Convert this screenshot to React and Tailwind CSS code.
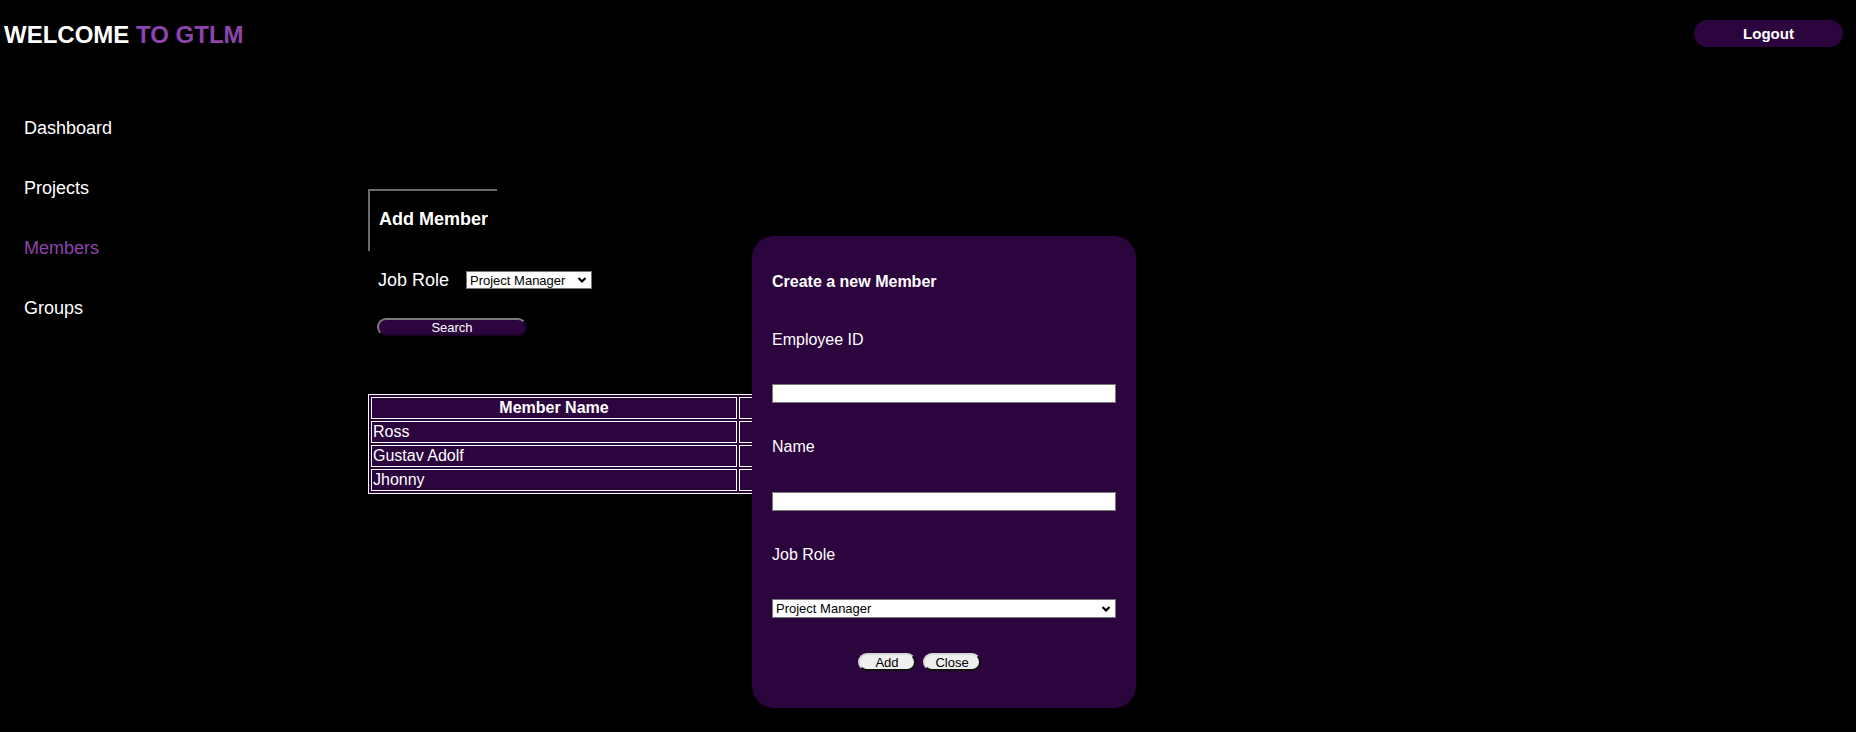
import React, { useState } from 'react';

const roles = ['Project Manager', 'Developer', 'Tester', 'Designer'];

const members = [
  { name: 'Ross', role: 'Project Manager' },
  { name: 'Gustav Adolf', role: 'Project Manager' },
  { name: 'Jhonny', role: 'Project Manager' },
];

const Chevron = () => (
  <svg width="10" height="8" viewBox="0 0 10 8" className="pointer-events-none absolute right-[5px] top-1/2 -translate-y-1/2">
    <path d="M1.5 2 L5 5.5 L8.5 2" fill="none" stroke="#000" strokeWidth="2.2" />
  </svg>
);

const RoleSelect = ({ value, onChange, className }) => (
  <div className={'relative ' + className}>
    <select
      value={value}
      onChange={(e) => onChange(e.target.value)}
      className="block h-full w-full appearance-none rounded-none border border-[#767676] bg-white py-0 pl-[3px] pr-[16px] text-[13px] leading-[15px] text-black outline-none"
    >
      {roles.map((r) => (
        <option key={r} value={r}>{r}</option>
      ))}
    </select>
    <Chevron />
  </div>
);

const App = () => {
  const [searchRole, setSearchRole] = useState('Project Manager');
  const [newRole, setNewRole] = useState('Project Manager');
  const [empId, setEmpId] = useState('');
  const [name, setName] = useState('');

  return (
    <div className="relative h-[732px] w-full overflow-hidden bg-black text-white" style={{ fontFamily: '"Liberation Sans", Arial, sans-serif' }}>
      {/* header */}
      <div className="flex items-start justify-between pt-[20px] pr-[13px]">
        <h1 className="mt-[1px] pl-[4px] text-[24px] font-bold leading-[28px]">
          WELCOME <span className="text-[#8e44ad]">TO GTLM</span>
        </h1>
        <button className="h-[27px] w-[149px] rounded-full bg-[#2c043e] pt-[1px] text-[15px] font-bold text-white">
          Logout
        </button>
      </div>

      <div className="flex">
        {/* sidebar */}
        <nav className="mt-[69px] flex w-[368px] shrink-0 flex-col gap-[40px] pl-[24px] text-[18px] leading-[20px]">
          <a className="text-white">Dashboard</a>
          <a className="text-white">Projects</a>
          <a className="text-[#8e44ad]">Members</a>
          <a className="text-white">Groups</a>
        </nav>

        {/* main */}
        <div className="mt-[140px] flex flex-col">
          <div className="h-[62px] w-[129px] border-l-2 border-t-2 border-[#6b6b6b] pl-[9px] pt-[18px]">
            <h2 className="whitespace-nowrap text-[18px] font-bold leading-[20px]">Add Member</h2>
          </div>

          <div className="mt-[19px] flex items-center pl-[10px]">
            <label className="w-[88px] text-[18px] leading-[20px]">Job Role</label>
            <RoleSelect value={searchRole} onChange={setSearchRole} className="h-[18px] w-[126px]" />
          </div>

          <button className="ml-[9px] mt-[28px] h-[18px] w-[150px] rounded-full border-2 border-b-[#1a0026] border-l-[#7a7a7a] border-r-[#1a0026] border-t-[#7a7a7a] bg-[#2c043e] text-[13px] leading-none text-white">
            Search
          </button>

          <table className="mt-[58px] w-[700px] border-separate border-spacing-[2px] border border-white bg-[#2c043e] text-[16px] leading-[18px]">
            <thead>
              <tr>
                <th className="w-[366px] border border-white px-[1px] py-[1px] font-bold">Member Name</th>
                <th className="border border-white px-[1px] py-[1px] font-bold">Job Role</th>
              </tr>
            </thead>
            <tbody>
              {members.map((m) => (
                <tr key={m.name}>
                  <td className="border border-white px-[1px] py-[1px]">{m.name}</td>
                  <td className="border border-white px-[1px] py-[1px] text-center">{m.role}</td>
                </tr>
              ))}
            </tbody>
          </table>
        </div>
      </div>

      {/* create member modal */}
      <div className="absolute left-[752px] top-[236px] z-10 h-[472px] w-[384px] rounded-[22px] bg-[#2c043e] px-[20px] pt-[37px]">
        <h3 className="text-[16px] font-bold leading-[18px]">Create a new Member</h3>

        <p className="mt-[40px] text-[16px] leading-[18px]">Employee ID</p>
        <input
          value={empId}
          onChange={(e) => setEmpId(e.target.value)}
          className="mt-[35px] block h-[19px] w-full border border-[#767676] bg-white text-[13px] text-black outline-none"
        />

        <p className="mt-[35px] text-[16px] leading-[18px]">Name</p>
        <input
          value={name}
          onChange={(e) => setName(e.target.value)}
          className="mt-[36px] block h-[19px] w-full border border-[#767676] bg-white text-[13px] text-black outline-none"
        />

        <p className="mt-[35px] text-[16px] leading-[18px]">Job Role</p>
        <RoleSelect value={newRole} onChange={setNewRole} className="mt-[35px] h-[19px] w-full" />

        <div className="ml-[86px] mt-[35px] flex gap-[7px]">
          <button className="h-[18px] w-[58px] rounded-full border-2 border-b-[#111] border-l-[#d8d8d8] border-r-[#111] border-t-[#d8d8d8] bg-[#efefef] text-[13px] leading-none text-black">
            Add
          </button>
          <button className="h-[18px] w-[58px] rounded-full border-2 border-b-[#111] border-l-[#d8d8d8] border-r-[#111] border-t-[#d8d8d8] bg-[#efefef] text-[13px] leading-none text-black">
            Close
          </button>
        </div>
      </div>
    </div>
  );
};

export default App;
